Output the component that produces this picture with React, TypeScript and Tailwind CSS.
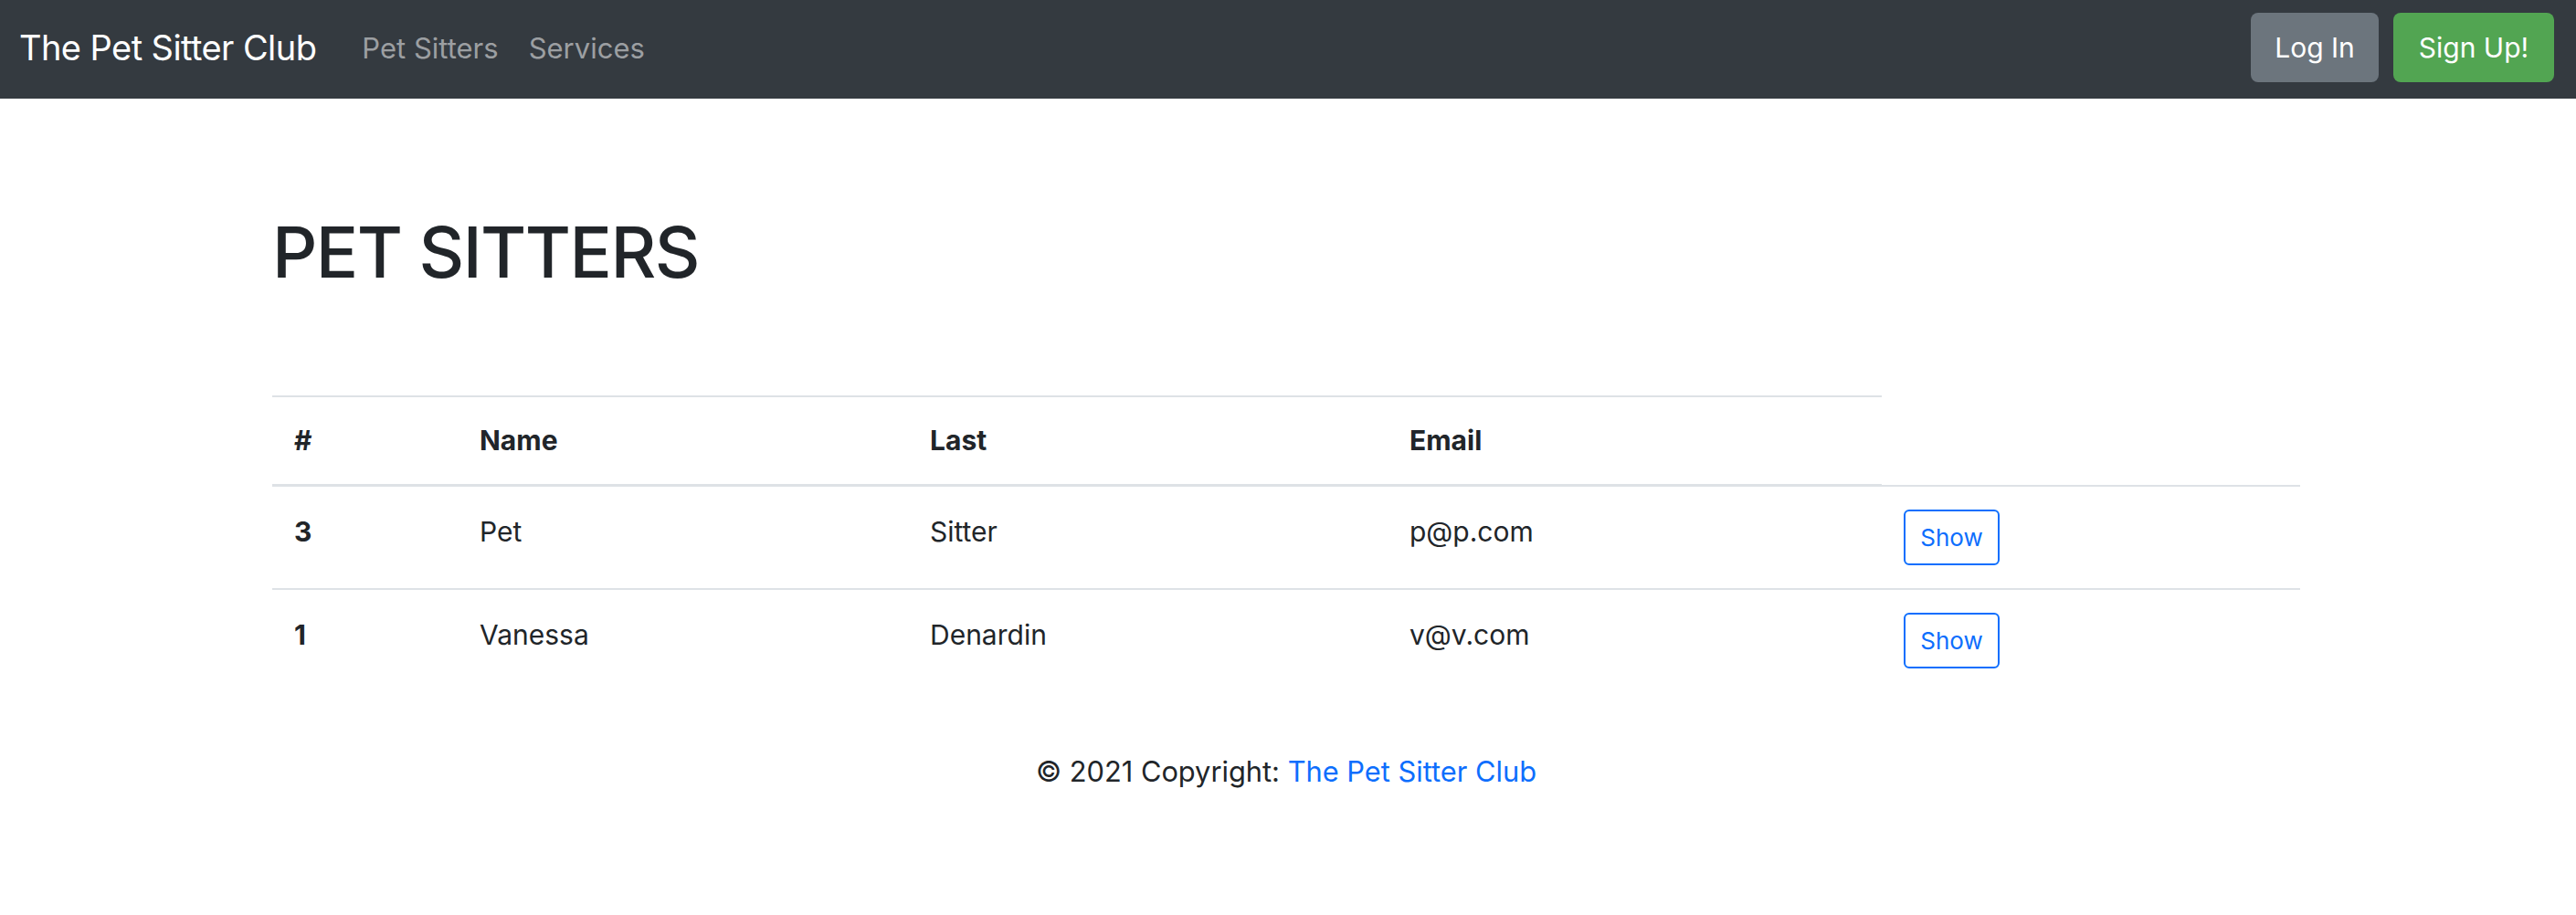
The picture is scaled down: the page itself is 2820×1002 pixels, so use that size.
import React from "react";

const rows = [
  { id: "3", name: "Pet", last: "Sitter", email: "p@p.com" },
  { id: "1", name: "Vanessa", last: "Denardin", email: "v@v.com" },
];

export default function App() {
  return (
    <div className="min-h-[1002px] bg-white text-[#212529] font-['Inter',sans-serif]">
      <nav className="flex h-[108px] items-start bg-[#343a40] pl-[21px] pr-[24px]">
        <a className="mt-[22px] text-[38px] leading-[60px] tracking-[-0.015em] text-white">The Pet Sitter Club</a>
        <div className="ml-[50px] mt-[30px] flex gap-[33px] text-[31px] leading-[45px] text-[#9c9fa2]">
          <a>Pet Sitters</a>
          <a>Services</a>
        </div>
        <div className="ml-auto mt-[14px] flex gap-[16px]">
          <button className="flex h-[76px] w-[140px] items-center justify-center rounded-[8px] bg-[#6c757d] text-[30px] leading-[45px] text-white">
            Log In
          </button>
          <button className="flex h-[76px] w-[176px] items-center justify-center rounded-[8px] bg-[#52a552] text-[30px] leading-[45px] text-white">
            Sign Up!
          </button>
        </div>
      </nav>

      <main className="ml-[298px] w-[2220px]">
        <h1 className="mt-[122px] text-[77px] font-medium leading-[92px] tracking-[-0.02em]">PET SITTERS</h1>

        <div className="mt-[111px]">
          <div className="flex">
            <div className="grid h-[100px] w-[1762px] grid-cols-[203px_493px_525px_541px] border-t-2 border-b-[3px] border-[#dee2e6] text-[30px] font-bold leading-[45px]">
              <div className="px-[24px] pt-[25px]">#</div>
              <div className="px-[24px] pt-[25px]">Name</div>
              <div className="px-[24px] pt-[25px]">Last</div>
              <div className="px-[24px] pt-[25px]">Email</div>
            </div>
            <div className="h-[100px] w-[458px] border-b-2 border-[#dee2e6]" />
          </div>

          {rows.map((r, i) => (
            <div
              key={r.id}
              className={
                i === 0
                  ? "grid h-[113px] grid-cols-[203px_493px_525px_541px_458px] border-b-2 border-[#dee2e6] text-[30px] leading-[45px]"
                  : "grid h-[111px] grid-cols-[203px_493px_525px_541px_458px] text-[30px] leading-[45px]"
              }
            >
              <div className="px-[24px] pt-[27px] font-bold">{r.id}</div>
              <div className="px-[24px] pt-[27px]">{r.name}</div>
              <div className="px-[24px] pt-[27px]">{r.last}</div>
              <div className="px-[24px] pt-[27px]">{r.email}</div>
              <div className="px-[24px] pt-[25px]">
                <button className="flex h-[61px] w-[105px] items-center justify-center rounded-[6px] border-2 border-[#0d6efd] text-[26px] leading-[39px] text-[#0d6efd]">
                  Show
                </button>
              </div>
            </div>
          ))}
        </div>

        <footer className="mt-[65px] text-center text-[30.8px] leading-[45px]">
          © 2021 Copyright: <a className="text-[#0d6efd]">The Pet Sitter Club</a>
        </footer>
      </main>
    </div>
  );
}
